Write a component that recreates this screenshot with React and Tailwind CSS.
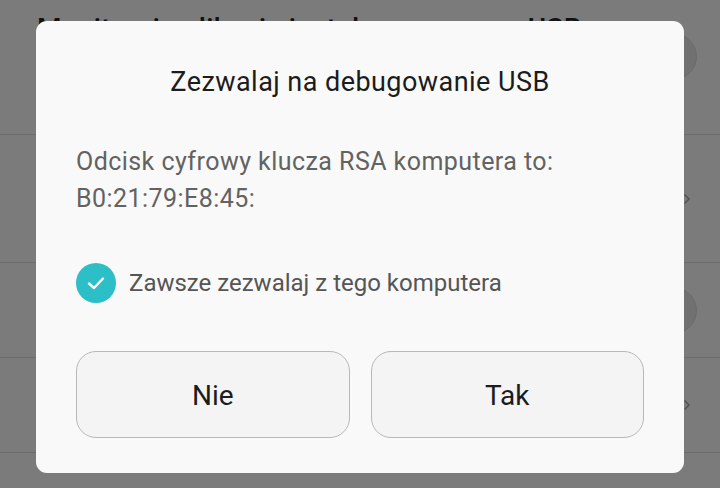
import React from "react";

const font = { fontFamily: "Roboto, 'Noto Sans', sans-serif" };

function Chevron() {
  return (
    <svg width="8" height="12" viewBox="0 0 8 12" className="block">
      <path d="M1.5 1.5 L6 6 L1.5 10.5" fill="none" stroke="#505050" strokeWidth="1.4" />
    </svg>
  );
}

function Knob() {
  return <div className="w-[47px] h-[47px] rounded-full bg-[#717171] border border-[#6c6c6c]" />;
}

export default function App() {
  return (
    <div className="relative w-[720px] h-[488px] overflow-hidden bg-[#7b7b7b]" style={font}>
      {/* background settings list (dimmed) */}
      <div className="flex flex-col">
        <div className="h-[135px] border-b border-[#6d6d6d] flex justify-between pl-[37px] pr-[23px]">
          <div className="pt-[15px] text-[28px] leading-[28px] font-medium text-[#111] tracking-[0.3px]">
            Monitoruj aplikacje instalowane przez USB
          </div>
          <div className="pt-[33px]">
            <Knob />
          </div>
        </div>
        <div className="h-[128px] border-b border-[#6d6d6d] flex items-center justify-end pr-[29px]">
          <Chevron />
        </div>
        <div className="h-[95px] border-b border-[#6d6d6d] flex items-center justify-end pr-[23px]">
          <Knob />
        </div>
        <div className="h-[95px] border-b border-[#6d6d6d] flex items-center justify-end pr-[29px]">
          <Chevron />
        </div>
      </div>

      {/* dialog */}
      <div className="absolute left-[36px] top-[21px] w-[648px] h-[452px] rounded-[11px] bg-[#f9f9f9] flex flex-col px-[40px] pt-[45px]">
        <div className="text-center text-[27px] leading-[32px] tracking-[0.45px] text-[#1c1c1c]">
          Zezwalaj na debugowanie USB
        </div>
        <div className="mt-[45px] text-[25px] leading-[37px] tracking-[0.45px] text-[#626262]">
          <div>Odcisk cyfrowy klucza RSA komputera to:</div>
          <div>B0:21:79:E8:45:</div>
        </div>
        <div className="mt-[46px] flex items-center h-[40px]">
          <div className="w-[40px] h-[40px] rounded-full bg-[#2cbfc8] flex items-center justify-center">
            <svg width="20" height="16" viewBox="0 0 20 16">
              <path d="M3 8.5 L8 13 L17 3.5" fill="none" stroke="#fff" strokeWidth="2.4" strokeLinecap="round" strokeLinejoin="round" />
            </svg>
          </div>
          <div className="ml-[13px] text-[24px] leading-[32px] text-[#555]">
            Zawsze zezwalaj z tego komputera
          </div>
        </div>
        <div className="mt-[48px] flex gap-[21px]">
          <button className="flex-1 h-[87px] pt-[3px] rounded-[20px] border border-[#b8b8b8] bg-[#f4f4f4] text-[28px] text-[#1c1c1c] flex items-center justify-center">
            Nie
          </button>
          <button className="flex-1 h-[87px] pt-[3px] rounded-[20px] border border-[#b8b8b8] bg-[#f4f4f4] text-[28px] text-[#1c1c1c] flex items-center justify-center">
            Tak
          </button>
        </div>
      </div>
    </div>
  );
}
